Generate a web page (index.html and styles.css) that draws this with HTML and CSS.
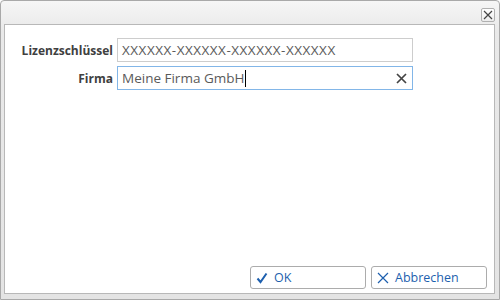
FILE: index.html
```html
<!DOCTYPE html>
<html lang="de">
<head>
<meta charset="utf-8">
<link rel="stylesheet" href="styles.css">
</head>
<body>
<div class="window">
  <div class="titlebar">
    <button class="close" type="button" aria-label="Schließen">
      <svg width="10" height="10" viewBox="0 0 10 10"><path d="M1 1L9 9M9 1L1 9" stroke="#444" stroke-width="1.2" fill="none"/></svg>
    </button>
  </div>
  <div class="panel">
    <div class="form">
      <label class="label">Lizenzschlüssel</label>
      <div class="input key">XXXXXX-XXXXXX-XXXXXX-XXXXXX</div>
      <label class="label">Firma</label>
      <div class="input focused"><span class="value">Meine Firma GmbH</span><span class="caret"></span>
        <svg class="clear" width="11" height="11" viewBox="0 0 11 11"><path d="M1 1L10 10M10 1L1 10" stroke="#444" stroke-width="1.7" fill="none"/></svg>
      </div>
    </div>
    <div class="actions">
      <button class="btn" type="button">
        <svg width="12" height="12" viewBox="0 0 12 12"><path d="M1.5 6.5L4.5 10L10.5 1.5" stroke="#1d5fae" stroke-width="2" fill="none"/></svg>
        <span>OK</span>
      </button>
      <button class="btn" type="button">
        <svg width="12" height="12" viewBox="0 0 12 12"><path d="M1 1L11 11M11 1L1 11" stroke="#1d5fae" stroke-width="1.2" fill="none"/></svg>
        <span>Abbrechen</span>
      </button>
    </div>
  </div>
</div>
</body>
</html>
```
FILE: styles.css
```css
* { box-sizing: border-box; }
html, body { margin: 0; padding: 0; background: #ffffff; }
body { font-family: "Open Sans", "Noto Sans", sans-serif; }

.window {
  width: 500px;
  height: 300px;
  border: 1px solid #a9a9a9;
  border-radius: 4px 4px 0 0;
  background: linear-gradient(#f6f6f6, #e9e9e9 30px, #e4e4e4);
  display: flex;
  flex-direction: column;
  padding: 0 4px 5px 3px;
}

.titlebar {
  height: 23px;
  display: flex;
  justify-content: flex-end;
  align-items: center;
  flex: none;
}

.close {
  width: 14px;
  height: 14px;
  margin-top: 4px;
  padding: 0;
  border: 1px solid #b0b0b0;
  border-radius: 2px;
  background: linear-gradient(#ffffff, #ececec);
  display: flex;
  align-items: center;
  justify-content: center;
}

.panel {
  flex: 1;
  background: #ffffff;
  border: 1px solid #b8b8b8;
  display: flex;
  flex-direction: column;
  justify-content: space-between;
}

.form {
  display: grid;
  grid-template-columns: 108px 296px;
  column-gap: 4px;
  row-gap: 4px;
  padding: 13px 0 0 0;
  align-items: center;
}

.label {
  text-align: right;
  font-weight: bold;
  font-size: 12px;
  color: #404040;
}

.input {
  height: 24px;
  border: 1px solid #cdcdcd;
  padding: 0 4px;
  display: flex;
  align-items: center;
  font-size: 13.5px;
  color: #5a5a5a;
  white-space: nowrap;
}

.input.key {
  letter-spacing: 0.5px;
}

.input.focused {
  border-color: #82b6e8;
}

.caret {
  display: inline-block;
  width: 1px;
  height: 17px;
  background: #000;
  margin-left: 1px;
}

.clear {
  margin-left: auto;
  margin-right: 1px;
}

.actions {
  display: flex;
  justify-content: flex-end;
  gap: 5px;
  padding: 0 7px 4px 0;
}

.btn {
  width: 116px;
  height: 23px;
  border: 1px solid #acacac;
  border-radius: 3px;
  background: #ffffff;
  display: flex;
  align-items: center;
  gap: 6px;
  padding: 0 0 0 5px;
  font-family: "Open Sans", "Noto Sans", sans-serif;
  font-size: 12.5px;
  color: #1d5fae;
}
```
